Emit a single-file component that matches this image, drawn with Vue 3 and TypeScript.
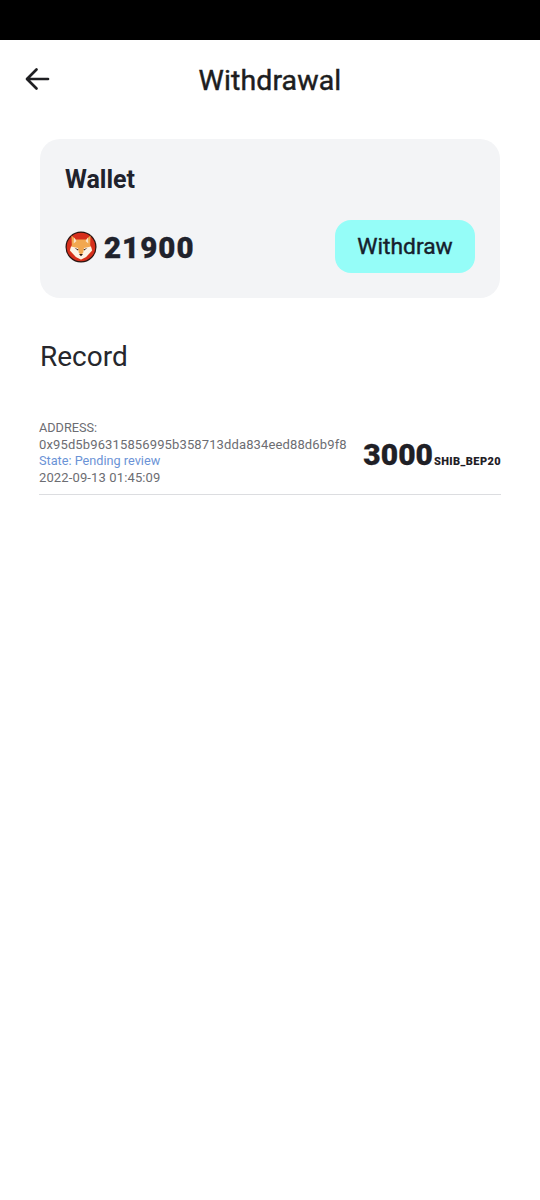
<script setup lang="ts">
const record = {
  address: '0x95d5b96315856995b358713dda834eed88d6b9f8',
  state: 'State: Pending review',
  time: '2022-09-13 01:45:09',
  amount: '3000',
  unit: 'SHIB_BEP20',
}
</script>

<template>
  <div class="page">
    <div class="statusbar"></div>
    <header class="header">
      <svg class="back" width="28" height="28" viewBox="0 0 28 28" fill="none" stroke="#1f1f22" stroke-width="2.7" stroke-linecap="round" stroke-linejoin="round">
        <path d="M24 14H3.500M12.500 4.500 3 14l9.500 9.500" />
      </svg>
      <h1 class="title">Withdrawal</h1>
    </header>

    <section class="card">
      <div class="card-label">Wallet</div>
      <div class="card-row">
        <div class="balance">
          <svg class="coin" width="32" height="32" viewBox="0 0 32 32">
            <circle cx="16" cy="16" r="15.500" fill="#2a1512" />
            <circle cx="16" cy="16" r="14.300" fill="#d62f1c" />
            <path d="M6.500 4.500 11 8.500h10l4.500-4-.3 9.500 2 5.500L21 26l-5 2.500-5-2.500-6.200-6.500 2-5.500z" fill="#f2a850" />
            <path d="M6 15.500 13 17l.8 5 2.200 1.500 2.200-1.500.8-5 7-1.500 1 4L21 26l-5 2.500-5-2.500-6-6.500z" fill="#fdf3e6" />
            <path d="M9 6.500l2.500 3.500-2.800 2.500zM23 6.500 20.500 10l2.800 2.500z" fill="#fbe3c8" />
            <path d="M9.500 16.800l4 1.600-.7 1.200zM22.500 16.800l-4 1.600.7 1.200z" fill="#33190f" />
            <path d="M14 23h4l-2 2.300z" fill="#33190f" />
          </svg>
          <span class="amount">21900</span>
        </div>
        <button class="withdraw">Withdraw</button>
      </div>
    </section>

    <h2 class="record-title">Record</h2>

    <div class="record">
      <div class="info">
        <div class="label">ADDRESS:</div>
        <div>{{ record.address }}</div>
        <div class="label state">{{ record.state }}</div>
        <div>{{ record.time }}</div>
      </div>
      <div class="value">
        <span class="value-num">{{ record.amount }}</span><span class="value-unit">{{ record.unit }}</span>
      </div>
    </div>
  </div>
</template>

<style>
html, body { background: #fff; }
</style>

<style scoped>
.page {
  width: 540px;
  height: 1200px;
  background: #fff;
  font-family: Roboto, "Liberation Sans", sans-serif;
  color: #1f2026;
  overflow: hidden;
}
.statusbar { height: 40px; background: #000; }
.header {
  height: 80px;
  display: flex;
  align-items: center;
  justify-content: center;
  position: relative;
}
.back { position: absolute; left: 24px; top: 25px; }
.title {
  margin: 0;
  font-size: 28.500px;
  font-weight: 400;
  letter-spacing: 0.1px;
  -webkit-text-stroke: 0.45px #1d1d20;
  color: #1d1d20;
}
.card {
  margin: 19px 40px 0;
  height: 159px;
  box-sizing: border-box;
  padding: 26px 25px 0;
  background: #f3f4f6;
  border-radius: 20px;
}
.card-label { font-size: 25px; font-weight: 700; line-height: 30px; color: #20222c; }
.card-row {
  margin-top: 25px;
  display: flex;
  align-items: center;
  justify-content: space-between;
}
.balance { display: flex; align-items: center; gap: 7px; }
.coin { display: block; }
.amount {
  font-size: 29.500px;
  font-weight: 900;
  letter-spacing: 1px;
  color: #20222c;
  -webkit-text-stroke: 0.3px #20222c;
  position: relative;
  top: 1px;
}
.withdraw {
  width: 140px;
  height: 53px;
  border: 0;
  border-radius: 16px;
  background: #95fdf8;
  font: 400 22.800px Roboto, sans-serif;
  -webkit-text-stroke: 0.4px #16202c;
  color: #16202c;
}
.record-title {
  margin: 41px 40px 0;
  font-size: 28px;
  font-weight: 400;
  line-height: 36px;
  color: #26272c;
}
.record {
  margin: 45px 39px 0;
  height: 75px;
  box-sizing: border-box;
  border-bottom: 1px solid #dcdde0;
  display: flex;
  justify-content: space-between;
  align-items: flex-start;
}
.info { font-size: 13px; line-height: 16.500px; color: #6c6d72; letter-spacing: 0.13px; }
.label { font-size: 12.700px; letter-spacing: 0; }
.state { color: #6b93d6; }
.value {
  margin-top: 17px;
  display: flex;
  align-items: baseline;
  font-weight: 900;
  color: #1f2026;
}
.value-num { font-size: 30px; -webkit-text-stroke: 0.3px #1f2026; margin-right: 1px; }
.value-unit { font-size: 11px; letter-spacing: 0.4px; }
</style>
